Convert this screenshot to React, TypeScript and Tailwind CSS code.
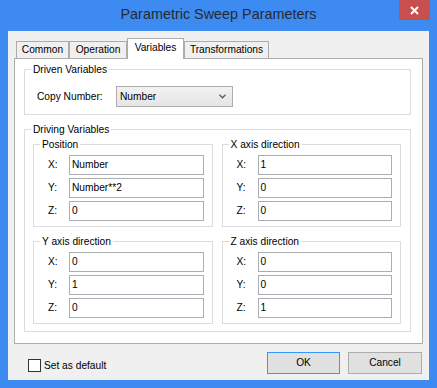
import React from 'react';

const font = { fontFamily: '"Liberation Sans", Arial, sans-serif' };

function Field({ label, value }: { label: string; value: string }) {
    return (
        <div className="flex items-center h-[20px]">
            <span className="w-[21px] text-black">{label}</span>
            <div className="flex-1 h-[20px] border border-[#abadb3] bg-white px-[2px] flex items-center text-black">
                {value}
            </div>
        </div>
    );
}

function AxisGroup({ title, values }: { title: string; values: string[] }) {
    return (
        <fieldset className="border border-[#dcdcdc]">
            <legend className="ml-[6px] px-[2px] leading-[13px] text-black">{title}</legend>
            <div className="flex flex-col gap-[3px] pl-[14px] pr-[8px] pt-[4px] pb-[5px]">
                <Field label="X:" value={values[0]} />
                <Field label="Y:" value={values[1]} />
                <Field label="Z:" value={values[2]} />
            </div>
        </fieldset>
    );
}

const tabs = [
    { name: 'Common', w: 'w-[53px]' },
    { name: 'Operation', w: 'w-[58px]' },
    { name: 'Variables', w: 'w-[57px]', active: true },
    { name: 'Transformations', w: 'w-[85px]' },
];

export default function App() {
    return (
        <div
            className="w-[437px] h-[388px] bg-[#3d8af1] flex flex-col px-[8px] pb-[8px] text-[10.2px]"
            style={font}
        >
            {/* Title bar */}
            <div className="relative h-[31px] flex items-center justify-center">
                <span className="text-[14.4px] text-[#262a30] pb-[1px]">Parametric Sweep Parameters</span>
                <div className="absolute top-0 right-[-1px] w-[31px] h-[20px] bg-[#c7504f] flex items-center justify-center">
                    <svg width="9" height="9" viewBox="0 0 9 9">
                        <path d="M1 1 L8 8 M8 1 L1 8" stroke="white" strokeWidth="2" />
                    </svg>
                </div>
            </div>

            {/* Client area */}
            <div className="flex-1 bg-[#f0f0f0] flex flex-col">
                {/* Tabs */}
                <div className="flex items-end h-[20px] mt-[7px] ml-[8px]">
                    {tabs.map((t) =>
                        t.active ? (
                            <div
                                key={t.name}
                                className={`${t.w} h-[21px] -mb-px relative z-10 bg-white border border-[#acacac] border-b-0 flex items-center justify-center pb-[3px] text-black`}
                            >
                                {t.name}
                            </div>
                        ) : (
                            <div
                                key={t.name}
                                className={`${t.w} h-[17px] bg-[#f0f0f0] border border-[#acacac] border-b-0 flex items-center justify-center text-black`}
                            >
                                {t.name}
                            </div>
                        )
                    )}
                </div>

                {/* Tab panel */}
                <div className="mx-[6px] h-[286px] bg-white border border-[#acacac] pl-[9px] pr-[11px] pt-[4px]">
                    <fieldset className="border border-[#dcdcdc]">
                        <legend className="ml-[6px] px-[2px] leading-[13px] text-black">Driven Variables</legend>
                        <div className="flex items-center pl-[12px] pt-[10px] pb-[7px]">
                            <span className="w-[79px] text-black">Copy Number:</span>
                            <div className="w-[117px] h-[21px] border border-[#acacac] bg-gradient-to-b from-[#f2f2f2] to-[#e5e5e5] flex items-center justify-between pl-[3px] pr-[6px] text-black">
                                <span>Number</span>
                                <svg width="7" height="5" viewBox="0 0 7 5">
                                    <path d="M0.5 0.8 L3.5 3.8 L6.5 0.8" stroke="#606060" strokeWidth="1.4" fill="none" />
                                </svg>
                            </div>
                        </div>
                    </fieldset>

                    <fieldset className="mt-[8px] border border-[#dcdcdc]">
                        <legend className="ml-[6px] px-[2px] leading-[13px] text-black">Driving Variables</legend>
                        <div className="grid grid-cols-2 gap-x-[9px] gap-y-[8px] pl-[8px] pr-[9px] pt-[2px] pb-[7px]">
                            <AxisGroup title="Position" values={['Number', 'Number**2', '0']} />
                            <AxisGroup title="X axis direction" values={['1', '0', '0']} />
                            <AxisGroup title="Y axis direction" values={['0', '1', '0']} />
                            <AxisGroup title="Z axis direction" values={['0', '0', '1']} />
                        </div>
                    </fieldset>
                </div>

                {/* Bottom bar */}
                <div className="flex items-start mt-[8px] pl-[20px] pr-[7px]">
                    <div className="flex items-center mt-[6px]">
                        <div className="w-[13px] h-[13px] border border-[#333333] bg-white" />
                        <span className="ml-[3px] text-black">Set as default</span>
                    </div>
                    <div className="ml-auto flex gap-[8px]">
                        <button className="w-[73px] h-[22px] border border-[#3399ff] bg-[#e1e1e1] text-black">OK</button>
                        <button className="w-[74px] h-[22px] border border-[#adadad] bg-[#e1e1e1] text-black">Cancel</button>
                    </div>
                </div>
            </div>
        </div>
    );
}
